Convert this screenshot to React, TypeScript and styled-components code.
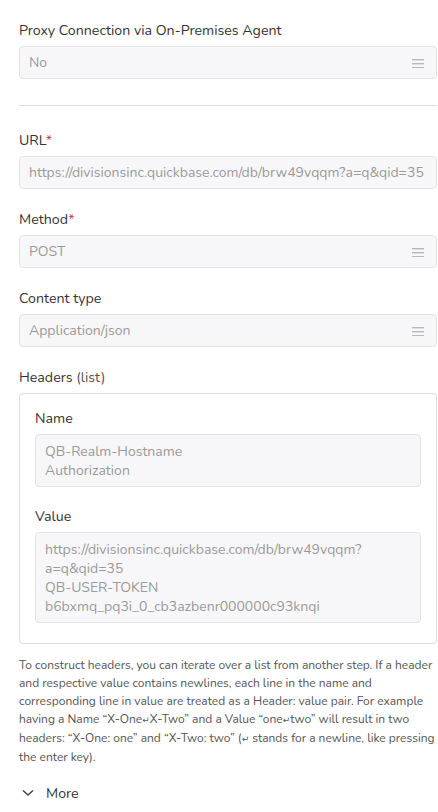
import React from "react";
import styled, { createGlobalStyle } from "styled-components";

const Global = createGlobalStyle`
  html, body { margin: 0; padding: 0; background: #fff; }
  body { font-family: Nunito, Lato, "Noto Sans", sans-serif; color: #333; }
  * { box-sizing: border-box; }
`;

const Page = styled.div`
  padding: 20px 1px 0 19px;
  width: 438px;
  display: flex;
  flex-direction: column;
`;

const Field = styled.div<{ $mb?: number }>`
  display: flex;
  flex-direction: column;
  gap: 6px;
  margin-bottom: ${(p) => p.$mb ?? 20}px;
`;

const Label = styled.div`
  font-size: 14.2px;
  line-height: 22px;
  height: 20px;
  color: #333;
`;

const Star = styled.span`
  color: #d0453f;
`;

const Light = styled.span`
  color: #555;
`;

const Box = styled.div`
  height: 33px;
  border: 1px solid #e2e3e5;
  border-radius: 4px;
  background: #f7f7f9;
  display: flex;
  align-items: center;
  padding: 0 12px 0 9px;
  font-size: 14px;
  color: #9a9a9a;
  white-space: nowrap;
  overflow: hidden;
`;

const BoxText = styled.span`
  flex: 1;
  overflow: hidden;
`;

const Divider = styled.div`
  height: 1px;
  background: #dcdcdc;
  margin: 0 0 24px 0;
`;

const Menu = () => (
  <svg width="12" height="10" viewBox="0 0 12 10">
    <rect x="0" y="1" width="12" height="1.4" fill="#b8b8b8" />
    <rect x="0" y="5" width="12" height="1.4" fill="#b8b8b8" />
    <rect x="0" y="9" width="12" height="1.4" fill="#b8b8b8" />
  </svg>
);

const ListBox = styled.div`
  border: 1px solid #dcdcdc;
  border-radius: 4px;
  background: #fff;
  padding: 14px 15px 20px 15px;
  display: flex;
  flex-direction: column;
`;

const Area = styled.div`
  border: 1px solid #e2e3e5;
  border-radius: 4px;
  background: #f7f7f9;
  padding: 7px 9px 6px 9px;
  font-size: 14px;
  line-height: 19px;
  color: #9a9a9a;
  white-space: pre;
  overflow: hidden;
`;

const Help = styled.p`
  margin: 12px 0 0 0;
  font-size: 12px;
  line-height: 18px;
  color: #555;
  white-space: nowrap;
`;

const Ret = styled.span`
  font-size: 9px;
  font-family: "DejaVu Sans", sans-serif;
`;

const More = styled.div`
  margin-top: 17px;
  display: flex;
  align-items: center;
  gap: 12px;
  height: 20px;
  font-size: 14.2px;
  color: #333;
  padding-left: 3px;
`;

export default function App() {
  return (
    <>
      <Global />
      <Page>
        <Field $mb={26}>
          <Label>Proxy Connection via On-Premises Agent</Label>
          <Box>
            <BoxText>No</BoxText>
            <Menu />
          </Box>
        </Field>
        <Divider />
        <Field>
          <Label>
            URL<Star>*</Star>
          </Label>
          <Box>
            <BoxText>https://divisionsinc.quickbase.com/db/brw49vqqm?a=q&amp;qid=35</BoxText>
          </Box>
        </Field>
        <Field>
          <Label>
            Method<Star>*</Star>
          </Label>
          <Box>
            <BoxText>POST</BoxText>
            <Menu />
          </Box>
        </Field>
        <Field>
          <Label>Content type</Label>
          <Box>
            <BoxText>Application/json</BoxText>
            <Menu />
          </Box>
        </Field>
        <Field $mb={0}>
          <Label>
            Headers <Light>(list)</Light>
          </Label>
          <ListBox>
            <Field $mb={19}>
              <Label>Name</Label>
              <Area>{"QB-Realm-Hostname\nAuthorization"}</Area>
            </Field>
            <Field $mb={0}>
              <Label>Value</Label>
              <Area>
                {"https://divisionsinc.quickbase.com/db/brw49vqqm?\na=q&qid=35\nQB-USER-TOKEN\nb6bxmq_pq3i_0_cb3azbenr000000c93knqi"}
              </Area>
            </Field>
          </ListBox>
        </Field>
        <Help>
          To construct headers, you can iterate over a list from another step. If a header
          <br />
          and respective value contains newlines, each line in the name and
          <br />
          corresponding line in value are treated as a Header: value pair. For example
          <br />
          having a Name “X-One<Ret>↵</Ret>X-Two” and a Value “one<Ret>↵</Ret>two” will result in two
          <br />
          headers: “X-One: one” and “X-Two: two” (<Ret>↵</Ret> stands for a newline, like pressing
          <br />
          the enter key).
        </Help>
        <More>
          <svg width="12" height="8" viewBox="0 0 12 8">
            <path d="M1 1.5 L6 6 L11 1.5" fill="none" stroke="#444" strokeWidth="1.6" />
          </svg>
          More
        </More>
      </Page>
    </>
  );
}
